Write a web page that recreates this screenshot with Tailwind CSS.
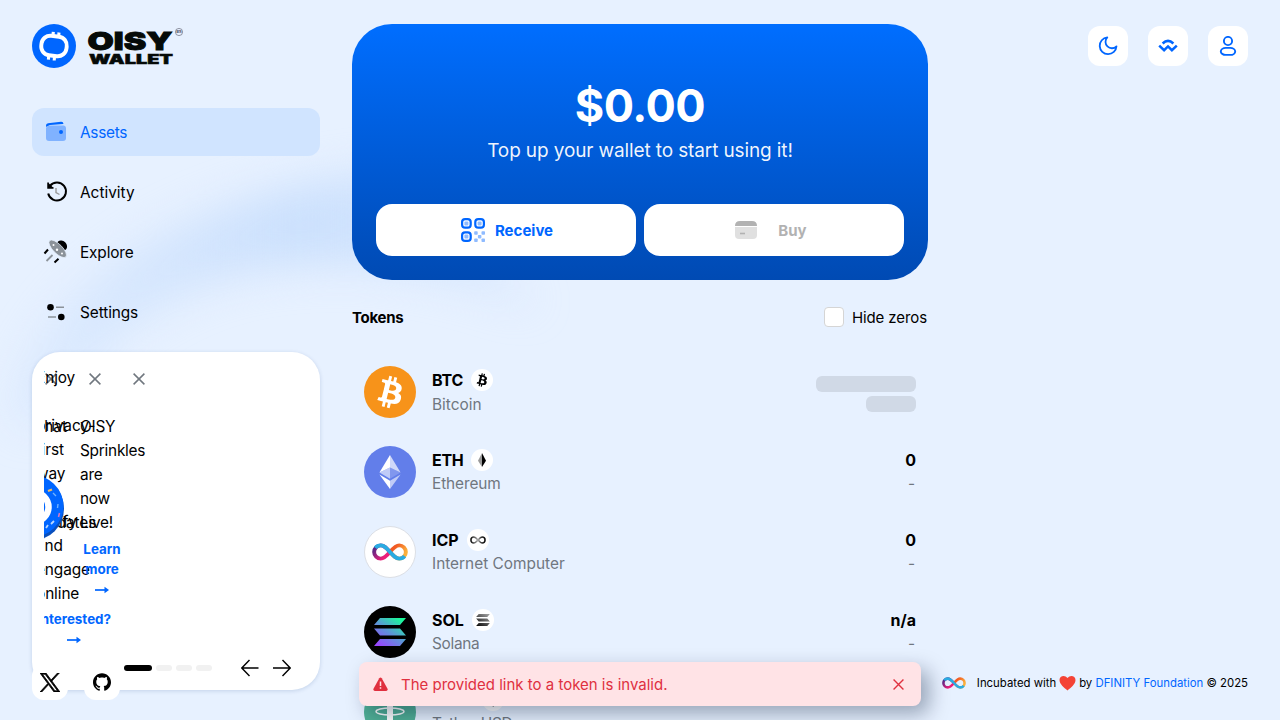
<!DOCTYPE html>
<html lang="en">
<head>
<meta charset="utf-8">
<title>OISY Wallet</title>
<script src="https://cdn.jsdelivr.net/npm/@tailwindcss/browser@4"></script>
</head>
<body class="relative h-[720px] w-[1280px] overflow-hidden bg-[#e7f1ff] font-['Inter',sans-serif] text-[15.4px] leading-6 text-black">

<!-- Soft background wave -->
<svg class="absolute inset-0 -z-10" width="1280" height="720" viewBox="0 0 1280 720" fill="none">
  <defs>
    <filter id="soft" x="-20%" y="-40%" width="140%" height="180%" color-interpolation-filters="sRGB"><feGaussianBlur stdDeviation="20"/></filter>
    <linearGradient id="wave" x1="0" y1="0" x2="600" y2="0" gradientUnits="userSpaceOnUse">
      <stop offset="0" stop-color="#cbe0fd" stop-opacity=".3"/><stop offset=".5" stop-color="#cbe0fd"/><stop offset="1" stop-color="#cbe0fd" stop-opacity=".25"/>
    </linearGradient>
  </defs>
  <path d="M10 400C50 275 190 190 400 170L540 310C370 240 220 250 120 335C80 380 60 430 20 430Z" fill="url(#wave)" filter="url(#soft)"/>
</svg>

<svg width="0" height="0" class="absolute">
  <defs>
    <linearGradient id="icpR" x1="20" y1="2" x2="36" y2="14" gradientUnits="userSpaceOnUse"><stop offset=".2" stop-color="#f15a24"/><stop offset=".8" stop-color="#fbb03b"/></linearGradient>
    <linearGradient id="icpL" x1="16" y1="16" x2="1" y2="3" gradientUnits="userSpaceOnUse"><stop offset=".2" stop-color="#ed1e79"/><stop offset=".9" stop-color="#522785"/></linearGradient>
    <linearGradient id="sol" x1="28" y1="2" x2="8" y2="30" gradientUnits="userSpaceOnUse"><stop offset="0" stop-color="#19fb9b"/><stop offset=".5" stop-color="#5d94d8"/><stop offset="1" stop-color="#9945ff"/></linearGradient>
    <linearGradient id="solg" x1="28" y1="2" x2="8" y2="30" gradientUnits="userSpaceOnUse"><stop offset="0" stop-color="#999"/><stop offset="1" stop-color="#111"/></linearGradient>
    <linearGradient id="icpG" x1="0" y1="0" x2="37" y2="0" gradientUnits="userSpaceOnUse"><stop offset="0" stop-color="#000"/><stop offset=".35" stop-color="#777"/><stop offset=".5" stop-color="#aaa"/><stop offset=".7" stop-color="#333"/><stop offset="1" stop-color="#000"/></linearGradient>
    <symbol id="btc" viewBox="0 0 32 32"><path d="M23.189 14.02c.314-2.096-1.283-3.223-3.465-3.975l.708-2.84-1.728-.43-.69 2.765c-.454-.114-.92-.22-1.385-.326l.695-2.783L15.596 6l-.708 2.839c-.376-.086-.746-.17-1.104-.26l.002-.009-2.384-.595-.46 1.846s1.283.294 1.256.312c.7.175.826.638.805 1.006l-.806 3.235c.048.012.11.03.18.057l-.183-.045-1.13 4.532c-.086.212-.303.531-.793.41.018.025-1.256-.313-1.256-.313l-.858 1.978 2.25.561c.418.105.828.215 1.231.318l-.715 2.872 1.727.43.708-2.84c.472.127.93.245 1.378.357l-.706 2.828 1.728.43.715-2.866c2.948.558 5.164.333 6.097-2.333.752-2.146-.037-3.385-1.588-4.192 1.13-.26 1.98-1.003 2.207-2.538zm-3.95 5.538c-.533 2.147-4.148.986-5.32.695l.95-3.805c1.172.293 4.929.872 4.37 3.11zm.535-5.569c-.487 1.953-3.495.96-4.47.717l.86-3.45c.975.243 4.118.696 3.61 2.733z" fill="currentColor"/></symbol>
    <symbol id="icp" viewBox="0 0 37 18">
      <path d="M18.5 9C15 5 12.500 2.200 9 2.200A6.800 6.800 0 0 0 2.200 9A6.800 6.800 0 0 0 9 15.800C12.500 15.800 15.500 12.500 18.500 9" fill="none" stroke="url(#icpL)" stroke-width="4"/>
      <path d="M18.500 9C21.500 5.500 24.500 2.200 28 2.200A6.800 6.800 0 0 1 34.800 9A6.800 6.800 0 0 1 28 15.800C24.500 15.800 22 13 18.500 9" fill="none" stroke="url(#icpR)" stroke-width="4"/>
      <path d="M3.500 4.700C4.800 3 6.900 2.200 9 2.200C12.500 2.200 15 5 18.500 9C22 13 24.500 15.800 28 15.800C30.100 15.800 32.200 14.900 33.500 13.200" fill="none" stroke="#29abe2" stroke-width="4"/>
    </symbol>
    <symbol id="close" viewBox="0 0 12 12"><path d="M.6.600 11.400 11.400M11.400.600.600 11.400" fill="none" stroke="currentColor" stroke-width="1.500"/></symbol>
    <symbol id="arrow" viewBox="0 0 16 8"><path d="M1 4H12" fill="none" stroke="currentColor" stroke-width="1.700"/><path d="M10.500.8 15 4 10.500 7.200Z" fill="currentColor"/></symbol>
  </defs>
</svg>

<div class="flex gap-8 px-8 pt-6">
  <!-- Sidebar -->
  <aside class="flex w-72 shrink-0 flex-col">
    <svg class="mb-10 h-11 w-[152px] overflow-visible" viewBox="0 0 152 44">
      <circle cx="22" cy="22" r="22" fill="#0066ff"/>
      <g fill="none" stroke="#fff">
        <rect x="9.300" y="12.200" width="25.400" height="19.600" rx="8.800" stroke-width="3.900" transform="rotate(7 22 22)"/>
        <path d="M20.900 12.500 21.300 7.800M26.600 13 27 8.500M16.800 31 16.400 35.600M22.600 31.500 22.200 36.500" stroke-width="3.100"/>
      </g>
      <g font-family="Inter, sans-serif" font-weight="900" fill="#050a08" stroke="#050a08">
        <text x="55.500" y="25.700" font-size="24.500" stroke-width=".9" textLength="85" lengthAdjust="spacingAndGlyphs">OISY</text>
        <text x="57" y="39.500" font-size="13" stroke-width=".5" textLength="84" lengthAdjust="spacingAndGlyphs">WALLET</text>
        <text x="144.400" y="9.400" font-size="3.600" stroke="none" textLength="5.200" lengthAdjust="spacingAndGlyphs" fill="#445">BETA</text>
      </g>
      <circle cx="147" cy="8" r="3.600" fill="none" stroke="#556" stroke-width=".6"/>
    </svg>

    <nav class="flex flex-col gap-3">
      <a class="flex h-12 items-center gap-3 rounded-xl bg-[#d0e4ff] px-3 text-[#0066ff]">
        <svg class="size-6" viewBox="0 0 24 24"><path d="M2 5.500Q2 3.500 4 3.200L17 1.700Q19.300 1.500 19.500 4L6 5 2.200 7Z" fill="#0066ff"/><path d="M2 7.500Q3 5.400 6 5.400H20Q22 6 22 8V18Q22 21 19 21H5Q2 21 2 18Z" fill="#80b2ff"/><circle cx="17" cy="12" r="2" fill="#0066ff"/></svg>
        <span class="pt-0.5 tracking-[-0.3px]">Assets</span>
      </a>
      <a class="flex h-12 items-center gap-3 px-3">
        <svg class="size-6 translate-x-px" viewBox="0 0 24 24" fill="none"><path d="M5 5.800A9 9 0 1 1 3.200 13.500" stroke="#000" stroke-width="2"/><path d="M3 2.500v5.500h5.500" fill="#000" stroke="#000" stroke-width="1.500"/><path d="M11 8v4.500l3.500 2" stroke="#999" stroke-width="1.400"/></svg>
        <span class="pt-0.5">Activity</span>
      </a>
      <a class="flex h-12 items-center gap-3 px-3">
        <svg class="size-6 overflow-visible" viewBox="0 0 24 24"><ellipse cx="18" cy="5.500" rx="5.600" ry="4.500" transform="rotate(45 18 5.500)" fill="#000"/><ellipse cx="13.700" cy="8.800" rx="11.500" ry="4.600" transform="rotate(45 13.700 8.800)" fill="#8b9299" stroke="#e7f1ff" stroke-width=".7"/><g fill="#fff"><circle cx="9.500" cy="5" r="1"/><circle cx="13" cy="9.700" r="1.200"/><circle cx="18" cy="13.500" r="1"/></g><path d="M4 9.500.5 13.500M14.500 18.800 10.500 22.500" stroke="#000" stroke-width="2"/><path d="M8.500 15 2.500 21" stroke="#8b9299" stroke-width="1.800"/></svg>
        <span class="pt-0.5 tracking-[-0.15px]">Explore</span>
      </a>
      <a class="flex h-12 items-center gap-3 px-3">
        <svg class="size-6" viewBox="0 0 24 24"><circle cx="6.500" cy="7.200" r="3.300"/><circle cx="17.300" cy="17" r="3.300"/><path d="M12 7.300h8M4 17h8" stroke="#8b9299" stroke-width="1.400"/></svg>
        <span class="pt-0.5 tracking-[-0.1px]">Settings</span>
      </a>
    </nav>

    <!-- News carousel; its collapsed slides overlap one another -->
    <section class="relative mt-4 h-[338px] rounded-[28px] bg-white shadow-[0_1px_4px_rgba(0,50,120,0.16)]">
      <div class="absolute inset-y-0 left-3 w-[264px] overflow-hidden">
        <svg class="absolute top-[21px] left-[1px] size-3 text-[#70777f]"><use href="#close"/></svg>
        <svg class="absolute top-[21px] left-[45px] size-3 text-[#70777f]"><use href="#close"/></svg>
        <svg class="absolute top-[21px] left-[89px] size-3 text-[#70777f]"><use href="#close"/></svg>
        <p class="absolute top-[14px] left-[-8px] w-16 tracking-[-0.1px]">Enjoy<br><span class="-ml-1">a</span><br>privacy-<br>first<br>way</p>
        <p class="absolute top-[63px] left-[-15px]">What</p>
        <p class="absolute top-[158px] left-[-8px] tracking-[-0.1px]">verify<br>and<br>engage<br>online</p>
        <p class="absolute top-[159px] left-[-8px] tracking-[-0.1px]">Updates</p>
        <svg class="absolute top-[121px] left-[-46px]" width="68" height="68" viewBox="0 0 68 68">
          <circle cx="34" cy="35.500" r="32" fill="#0a50bd"/>
          <ellipse cx="32.500" cy="33" rx="33" ry="31.500" fill="#0066ff"/>
          <g fill="none">
          <circle cx="36" cy="34" r="14.500" stroke="#fff" stroke-width="6.500"/>
          <path d="m50 18 4-1.500" stroke="#efbd68" stroke-width="2"/>
          <path d="m60 31-.5 4m-4.500-15 3 3" stroke="#6fb2ff" stroke-width="1.400"/>
          <path d="m61.500 40-1 4" stroke="#d879c1" stroke-width="1.500"/>
          <path d="m56 48-3 3m-3 1-2 3" stroke="#b7d7ff" stroke-width="1.800"/>
          </g>
        </svg>
        <p class="absolute top-[63px] left-[36px] w-16 tracking-[-0.25px]">OISY<br>Sprinkles<br>are<br>now<br>Live!</p>
        <div class="absolute top-[187px] left-[36px] flex w-11 flex-col items-center text-[13.4px] leading-5 font-bold text-[#0066ff]">
          <span>Learn</span><span>more</span>
          <svg class="h-2 w-4 translate-y-[7px]"><use href="#arrow"/></svg>
        </div>
        <div class="absolute top-[257px] left-[-8px] flex w-[76px] flex-col items-center text-[13.4px] leading-5 font-bold text-[#0066ff]">
          <span>Interested?</span>
          <svg class="h-2 w-4 translate-y-[7px]"><use href="#arrow"/></svg>
        </div>
      </div>
      <div class="absolute top-[306px] left-[92px] flex items-center">
        <div class="flex w-[88px] gap-1">
          <i class="h-1.5 w-7 rounded-full bg-black"></i><i class="h-1.5 w-4 rounded-full bg-[#f1f1f1]"></i><i class="h-1.5 w-4 rounded-full bg-[#f1f1f1]"></i><i class="h-1.5 w-4 rounded-full bg-[#f1f1f1]"></i>
        </div>
        <svg class="ml-[29px]" width="50" height="20" viewBox="0 0 50 20" fill="none" stroke="#000" stroke-width="1.400"><path d="M17.500 10H1M8.500 2 .8 10l7.700 8M32 10h17M41.500 2l7.700 8-7.700 8"/></svg>
      </div>
      <div class="absolute top-[312px] left-0 flex gap-4">
        <a class="grid size-9 place-items-center rounded-xl bg-white"><svg class="h-[19px] w-5" viewBox="0 0 24 24" preserveAspectRatio="none"><path d="M14.258 10.152 23.176 0h-2.113l-7.747 8.813L7.133 0H0l9.352 13.328L0 23.973h2.113l8.176-9.309 6.531 9.309h7.133zm-2.895 3.293-.949-1.328L2.875 1.560h3.246l6.086 8.523.945 1.328 7.910 11.078h-3.246z" stroke="#000" stroke-width="1"/></svg></a>
        <a class="grid size-9 place-items-center rounded-xl bg-white"><svg class="size-[18px]" viewBox="0 0 24 24"><path d="M12 .297c-6.630 0-12 5.373-12 12 0 5.303 3.438 9.800 8.205 11.385.6.113.820-.258.820-.577 0-.285-.010-1.040-.015-2.040-3.338.724-4.042-1.610-4.042-1.610C4.422 18.070 3.633 17.700 3.633 17.700c-1.087-.744.084-.729.084-.729 1.205.084 1.838 1.236 1.838 1.236 1.070 1.835 2.809 1.305 3.495.998.108-.776.417-1.305.760-1.605-2.665-.300-5.466-1.332-5.466-5.930 0-1.310.465-2.380 1.235-3.220-.135-.303-.540-1.523.105-3.176 0 0 1.005-.322 3.300 1.230.960-.267 1.980-.399 3-.405 1.020.006 2.040.138 3 .405 2.280-1.552 3.285-1.230 3.285-1.230.645 1.653.240 2.873.120 3.176.765.840 1.230 1.910 1.230 3.220 0 4.610-2.805 5.625-5.475 5.920.420.360.810 1.096.810 2.220 0 1.606-.015 2.896-.015 3.286 0 .315.210.690.825.570C20.565 22.092 24 17.592 24 12.297c0-6.627-5.373-12-12-12"/></svg></a>
      </div>
    </section>
  </aside>

  <!-- Main column -->
  <main class="w-[576px] shrink-0">
    <section class="flex h-64 flex-col items-center rounded-[40px] bg-linear-to-b from-[#006eff] to-[#004ab3] px-6 pb-6 text-white">
      <div class="mt-[50px] text-[45px] leading-[64px] font-bold tracking-[-0.5px]">$0.00</div>
      <p class="pt-px text-[19px] leading-6 tracking-[-0.12px] text-white/95">Top up your wallet to start using it!</p>
      <div class="mt-auto grid w-full grid-cols-2 gap-2 text-[15px] font-bold">
        <button class="flex h-[52px] items-center justify-center gap-2.5 rounded-2xl bg-white pl-0.5 text-[#0066ff]">
          <svg class="size-6" viewBox="0 0 24 24" fill="none"><g stroke="#0066ff" stroke-width="2.200"><rect x="1.100" y="1.100" width="8.600" height="8.600" rx="3"/><rect x="14.300" y="1.100" width="8.600" height="8.600" rx="3"/><rect x="1.100" y="14.300" width="8.600" height="8.600" rx="3"/></g><g fill="#8fbbff"><rect x="3.400" y="3.400" width="4" height="4" rx="1"/><rect x="16.600" y="3.400" width="4" height="4" rx="1"/><rect x="3.400" y="16.600" width="4" height="4" rx="1"/><rect x="13.200" y="13.200" width="3.500" height="3.500" rx=".8"/><rect x="20.500" y="13.200" width="3.500" height="3.500" rx=".8"/><rect x="16.900" y="16.900" width="3.500" height="3.500" rx=".8"/><rect x="13.200" y="20.500" width="3.500" height="3.500" rx=".8"/><rect x="20.500" y="20.500" width="3.500" height="3.500" rx=".8"/></g></svg>
          <span class="pt-0.5">Receive</span>
        </button>
        <button class="flex h-[52px] items-center justify-center gap-5 rounded-2xl bg-white pr-[7px] text-[#b2b2b2]">
          <svg class="size-6" viewBox="0 0 24 24"><path d="M1 9h22v8q0 4-4 4H5q-4 0-4-4z" fill="#e0e0e0"/><path d="M1 8Q1 3 6 3H18Q23 3 23 8Z" fill="#b2b2b2"/><path d="M6 15.500h5" stroke="#b2b2b2" stroke-width="1.600"/></svg>
          <span class="pt-0.5">Buy</span>
        </button>
      </div>
    </section>

    <div class="mt-[23px] flex h-7 items-center justify-between">
      <h2 class="pt-px text-[15px] font-bold tracking-[-0.3px]">Tokens</h2>
      <label class="flex items-center gap-2 pr-px text-[15px]"><span class="size-5 rounded border border-[#d5d5d5] bg-white"></span><span class="pt-0.5 tracking-[-0.1px]">Hide zeros</span></label>
    </div>

    <ul class="mt-[21px] flex flex-col">
      <li class="flex h-20 items-center gap-4 px-3">
        <span class="grid size-[52px] place-items-center rounded-full bg-[#f7931a] text-white"><svg class="size-[52px]"><use href="#btc"/></svg></span>
        <div class="flex-1">
          <div class="flex items-center gap-2 text-base font-bold"><span class="tracking-[-0.2px]">BTC</span><span class="size-[22px] rounded-full bg-white"><svg class="size-[22px]"><use href="#btc"/></svg></span></div>
          <div class="mt-px -mb-px text-[#70777f]">Bitcoin</div>
        </div>
        <div class="flex flex-col items-end gap-1 pt-1"><i class="h-4 w-[100px] rounded-md bg-[#d0d9e6]"></i><i class="h-4 w-[50px] rounded-md bg-[#d0d9e6]"></i></div>
      </li>
      <li class="flex h-20 items-center gap-4 px-3">
        <span class="size-[52px] rounded-full bg-[#627eea]"><svg viewBox="0 0 32 32"><g fill="#fff"><path fill-opacity=".7" d="M16 5.500v7.800l6.500 3z"/><path d="M16 5.500 9.500 16.300 16 13.300z"/><path fill-opacity=".6" d="M16 21.400v5l6.500-8.900z"/><path d="M16 26.400v-5l-6.500-3.900z"/><path fill-opacity=".2" d="m16 20.200 6.500-3.900-6.500-3z"/><path fill-opacity=".6" d="m9.500 16.300 6.500 3.900v-6.900z"/></g></svg></span>
        <div class="flex-1">
          <div class="flex items-center gap-2 text-base font-bold"><span class="tracking-[-0.3px]">ETH</span><span class="size-[22px] rounded-full bg-white"><svg viewBox="0 0 22 22"><path d="M11 4v14l-4-6.300z" fill="#999"/><path d="M11 4v14l4-6.300z" fill="#000"/></svg></span></div>
          <div class="text-[#70777f] tracking-[-0.1px]">Ethereum</div>
        </div>
        <div class="text-right"><div class="text-base font-bold">0</div><div class="pr-px text-[#70777f]">-</div></div>
      </li>
      <li class="flex h-20 items-center gap-4 px-3">
        <span class="grid size-[52px] place-items-center rounded-full border border-[#dcdfe5] bg-white"><svg class="h-[18px] w-9"><use href="#icp"/></svg></span>
        <div class="flex-1">
          <div class="flex items-center gap-2 text-base font-bold"><span>ICP</span><span class="grid size-[22px] place-items-center rounded-full bg-white"><svg class="h-2 w-4" viewBox="0 0 37 18" fill="none" stroke="url(#icpG)" stroke-width="3.500"><path d="M18.500 9C15 5 12.500 2.200 9 2.200A6.800 6.800 0 0 0 9 15.800C12.500 15.800 15.500 12.500 18.500 9C21.500 5.500 24.500 2.200 28 2.200A6.800 6.800 0 0 1 28 15.800C24.500 15.800 22 13 18.500 9Z"/></svg></span></div>
          <div class="text-[#70777f]">Internet Computer</div>
        </div>
        <div class="text-right"><div class="text-base font-bold">0</div><div class="pr-px text-[#70777f]">-</div></div>
      </li>
      <li class="flex h-20 items-center gap-4 px-3">
        <span class="grid size-[52px] place-items-center rounded-full bg-black"><svg class="h-7 w-8" viewBox="0 0 32 28" fill="url(#sol)"><path d="M6 0h26l-6 7H0zM0 10.500h26l6 7H6zM6 21h26l-6 7H0z"/></svg></span>
        <div class="flex-1">
          <div class="flex items-center gap-2 text-base font-bold"><span>SOL</span><span class="grid size-[22px] place-items-center rounded-full bg-white"><svg class="h-3 w-3.5" viewBox="0 0 32 28" fill="url(#solg)"><path d="M6 0h26l-6 7H0zM0 10.500h26l6 7H6zM6 21h26l-6 7H0z"/></svg></span></div>
          <div class="text-[#70777f] tracking-[-0.3px]">Solana</div>
        </div>
        <div class="text-right"><div class="text-base font-bold">n/a</div><div class="pr-px text-[#70777f]">-</div></div>
      </li>
      <li class="flex h-20 items-center gap-4 px-3">
        <span class="size-[52px] rounded-full bg-[#50af95]"><svg viewBox="0 0 52 52" fill="none" stroke="#fff"><path d="M14 14h24v5H14z" fill="#fff" stroke="none"/><path d="M26 15v24" stroke-width="6"/><ellipse cx="26" cy="25.500" rx="14" ry="3.500" stroke-width="1.400"/></svg></span>
        <div class="flex-1">
          <div class="flex items-center gap-2 font-bold"><span class="w-[42px]">USDT</span><span class="size-[22px] rounded-full bg-white"><svg viewBox="0 0 22 22"><path d="M11 4v14l-4-6.300z" fill="#999"/><path d="M11 4v14l4-6.300z" fill="#000"/></svg></span></div>
          <div class="tracking-[-0.3px] text-[#70777f]">Tether USD</div>
        </div>
      </li>
    </ul>
  </main>

  <!-- Header actions -->
  <div class="flex flex-1 items-start justify-end gap-5 pt-0.5 text-[#0066ff]">
    <button class="grid size-10 place-items-center rounded-xl bg-white"><svg class="size-5" viewBox="0 0 20 20" fill="none" stroke="currentColor" stroke-width="1.800" stroke-linejoin="round"><path d="M9.300 1.400A8.400 8.400 0 1 0 18.500 10.300A6.200 6.200 0 0 1 9.300 1.400Z"/></svg></button>
    <button class="grid size-10 place-items-center rounded-xl bg-white"><svg class="size-5" viewBox="0 0 20 20" fill="none" stroke="currentColor" stroke-width="2.500"><path d="m1.200 9.600 4.900 4.600 3.900-3.800 3.900 3.800 4.900-4.600M4.600 7.500Q10 2.300 15.400 7.500"/></svg></button>
    <button class="grid size-10 place-items-center rounded-xl bg-white"><svg class="size-5" viewBox="0 0 20 20" fill="none" stroke="currentColor" stroke-width="1.900"><circle cx="10" cy="5" r="4.100"/><rect x="2.800" y="11.900" width="14.400" height="7" rx="5" ry="3.500"/></svg></button>
  </div>
</div>

<!-- Error toast -->
<div class="absolute top-[662px] left-[359px] flex h-11 w-[562px] items-center rounded-lg bg-[#ffe3e6] px-3.5 text-[15px] text-[#e0303f] shadow-[8px_8px_20px_rgba(0,20,50,0.35)]">
  <svg class="size-[15px]" viewBox="0 0 16 16"><path d="M6.700 1.200q1.300-1.600 2.600 0l6.200 11.200q.6 2.100-1.500 2.600H2q-2.100-.5-1.500-2.600z" fill="currentColor"/><path d="M8 4.800v4.700M8 11v1.600" stroke="#ffe3e6" stroke-width="1.600"/></svg>
  <span class="ml-[13px] flex-1 pt-0.5">The provided link to a token is invalid.</span>
  <svg class="mr-[3px] size-[11px]"><use href="#close"/></svg>
</div>

<footer class="absolute top-[671px] right-8 flex items-center text-[11.36px] leading-6">
  <svg class="mr-[11px] h-3 w-6"><use href="#icp"/></svg>
  <span>Incubated with</span>
  <svg class="mx-[3px] h-4 w-[17px]" viewBox="0 0 17 16"><path d="M8.500 15.500C5 12.500.5 9 .5 5C.5.5 6-.5 8.500 3C11-.5 16.500.5 16.500 5C16.500 9 12 12.500 8.500 15.500Z" fill="#f44336"/></svg>
  <span>by <span class="text-[#0066ff]">DFINITY Foundation</span> © 2025</span>
</footer>
</body>
</html>
